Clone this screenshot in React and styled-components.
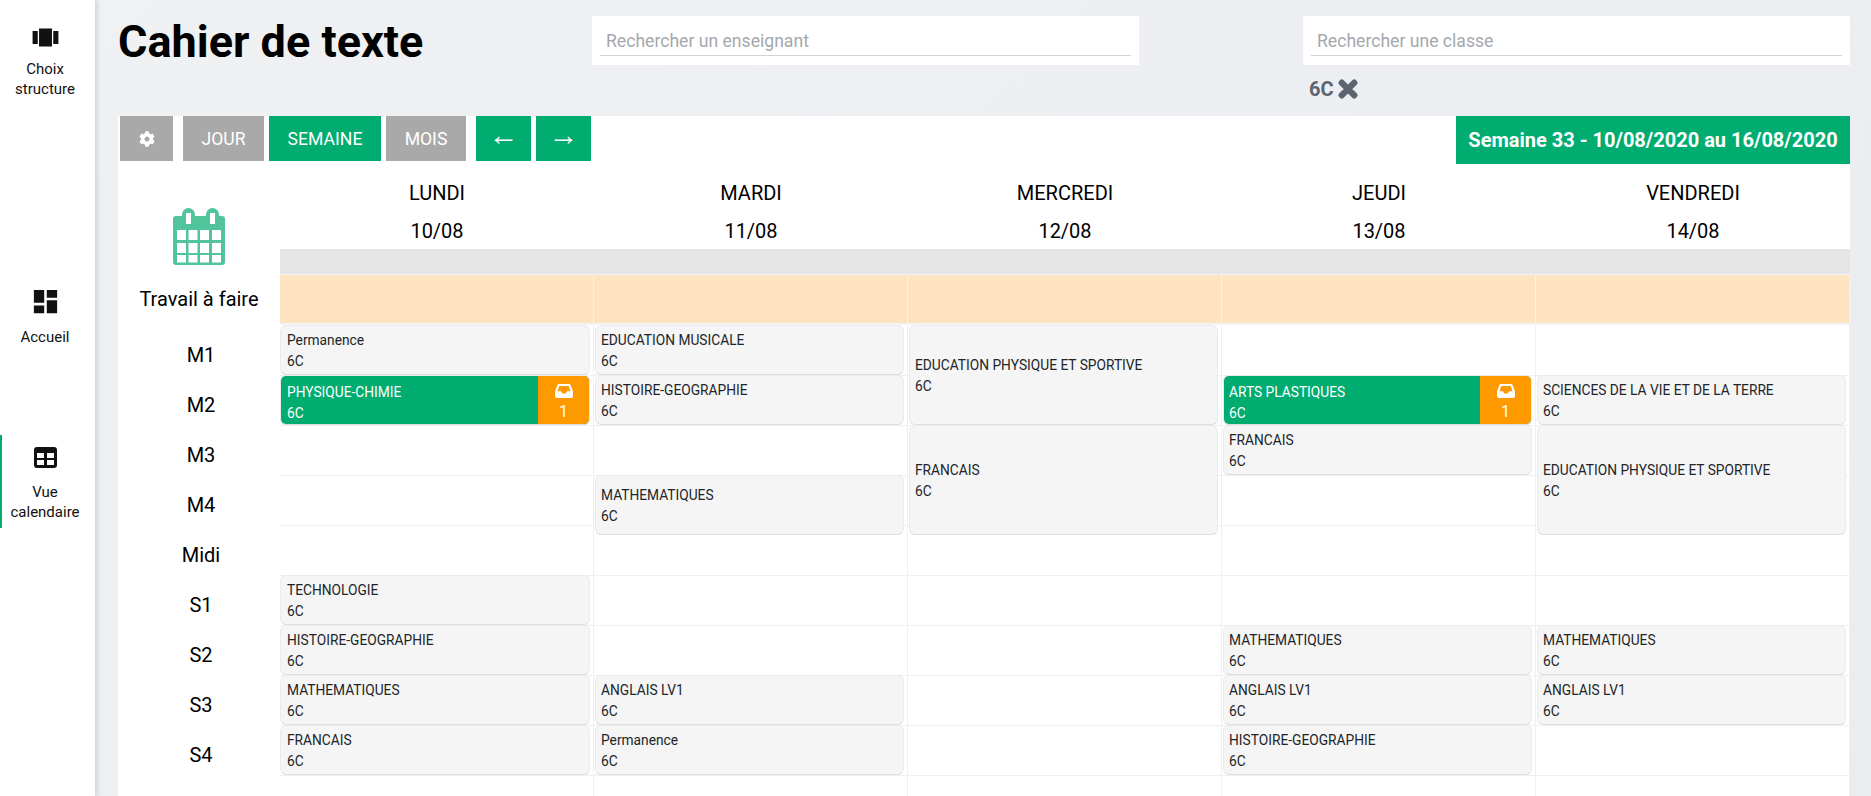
import React from 'react';
import styled, { createGlobalStyle } from 'styled-components';
import { FaCog, FaTimes } from 'react-icons/fa';
import { MdViewCarousel, MdDashboard } from 'react-icons/md';

const GlobalStyle = createGlobalStyle`
  html, body { margin: 0; padding: 0; height: 100%; }
  body {
    font-family: Roboto, "Liberation Sans", sans-serif;
    background: linear-gradient(135deg, #f0f1f3, #ebecf0);
    color: #000;
    overflow: hidden;
  }
`;

const GREEN = '#00ac6f';

const Page = styled.div`
  display: flex;
  height: 796px;
`;

const Sidebar = styled.nav`
  width: 95px;
  flex: none;
  background: #fff;
  box-shadow: 2px 0 5px rgba(0, 0, 0, 0.14);
  padding-top: 18px;
  box-sizing: border-box;
`;

const NavItem = styled.a`
  display: flex;
  flex-direction: column;
  align-items: center;
  text-align: center;
  height: ${p => p.$height}px;
  padding: ${p => p.$top}px 7px 0 0;
  box-sizing: border-box;
  border-left: 2px solid ${p => (p.$active ? GREEN : 'transparent')};
  font-size: 15px;
  line-height: 20px;
  color: #111;
  svg { display: block; margin-bottom: ${p => p.$iconGap}px; }
`;

const Main = styled.main`
  flex: 1;
  padding: 0 21px 0 23px;
  min-width: 0;
`;

const Header = styled.header`
  display: flex;
  height: 116px;
`;

const Title = styled.h1`
  margin: 15px 0 0;
  width: 474px;
  flex: none;
  font-size: 45px;
  line-height: 54px;
  font-weight: 700;
`;

const SearchBlock = styled.div`
  width: ${p => p.$width}px;
  margin-right: ${p => p.$right}px;
  flex: none;
  padding-top: 16px;
`;

const SearchBox = styled.div`
  height: 49px;
  background: #fff;
  padding: 8px 8px 0;
  box-sizing: border-box;
`;

const SearchInput = styled.input`
  display: block;
  width: 100%;
  height: 32px;
  box-sizing: border-box;
  border: 0;
  border-bottom: 1px solid #d4d4d4;
  outline: 0;
  padding: 2px 6px 0;
  background: transparent;
  font-family: inherit;
  font-size: 17.6px;
  &::placeholder { color: #a4a8ad; opacity: 1; }
`;

const Tag = styled.div`
  display: flex;
  align-items: center;
  gap: 1px;
  height: 24px;
  margin: 12px 0 0 6px;
  font-size: 20px;
  font-weight: 700;
  color: #5d6470;
  svg { stroke: currentColor; stroke-width: 28px; }
`;

const Panel = styled.section`
  background: #fff;
  height: 680px;
  overflow: hidden;
`;

const Toolbar = styled.div`
  display: flex;
  align-items: flex-start;
  padding-left: 2px;
`;

const ToolButton = styled.button`
  height: 45px;
  width: ${p => p.$width}px;
  margin-right: ${p => p.$right}px;
  flex: none;
  border: 0;
  padding: 0;
  background: ${p => (p.$green ? GREEN : '#a9a9a9')};
  color: #fff;
  font-family: inherit;
  font-size: 17.6px;
  display: flex;
  align-items: center;
  justify-content: center;
`;

const ArrowButton = styled(ToolButton)`
  font-size: 30px;
  font-weight: 300;
  padding-bottom: 8px;
`;

const WeekLabel = styled.div`
  margin-left: auto;
  width: 394px;
  height: 48px;
  background: ${GREEN};
  color: #fff;
  font-size: 20px;
  font-weight: 700;
  display: flex;
  align-items: center;
  justify-content: center;
`;

const Schedule = styled.div`
  display: grid;
  grid-template-columns: 162px repeat(5, 314px);
  grid-template-rows: 85px 25px 51px auto;
  height: 632px;
`;

const Corner = styled.div`
  grid-column: 1;
  grid-row: 1 / span 2;
  display: flex;
  justify-content: center;
  padding-top: 44px;
  box-sizing: border-box;
`;

const DayHead = styled.div`
  text-align: center;
  font-size: 20px;
  line-height: 38px;
  padding-top: 10px;
`;

const Band = styled.div`
  grid-column: 2 / span 5;
  background: #e5e5e5;
`;

const HomeworkLabel = styled.div`
  grid-column: 1;
  font-size: 20px;
  display: flex;
  justify-content: center;
  padding-top: 13px;
  box-sizing: border-box;
`;

const HomeworkCell = styled.div`
  background: #fde3bf;
  border: solid #f3f3f3;
  border-width: 1px 1px 2px 0;
`;

const SlotLabels = styled.div`
  grid-column: 1;
  display: flex;
  flex-direction: column;
`;

const SlotLabel = styled.div`
  height: 50px;
  font-size: 20px;
  text-align: center;
  line-height: 50px;
  padding: 5px 0 0 4px;
  box-sizing: border-box;
`;

const CardText = styled.div`
  flex: 1;
  display: flex;
  flex-direction: column;
  justify-content: center;
  padding: ${p => (p.$green ? '6px' : '1px')} 6px 0;
  font-size: 13.75px;
  line-height: 21px;
`;

const Card = styled.div`
  grid-row: ${p => p.$row} / span ${p => p.$span || 1};
  margin: 0 3px ${p => -(p.$extra || 0)}px 0;
  display: flex;
  background: ${p => (p.$green ? GREEN : '#f5f5f5')};
  color: ${p => (p.$green ? '#fff' : '#212529')};
  border: 1px solid #ebebeb;
  border-bottom-color: #dedede;
  border-radius: 6px;
  box-sizing: border-box;
  overflow: hidden;
`;

const DayColumn = styled.div`
  display: grid;
  grid-template-rows: repeat(9, 50px);
  align-content: start;
  border-right: 1px solid #f0f0f0;
  box-sizing: border-box;
  background: repeating-linear-gradient(to bottom, transparent 0 49px, #f0f0f0 49px 50px) 0 1px / 100% 450px no-repeat;
  & + & ${Card} { margin-left: 1px; }
  & + & ${CardText} { padding-left: 5px; }
`;

const Badge = styled.div`
  width: 51px;
  flex: none;
  background: #ff9900;
  color: #fff;
  display: flex;
  flex-direction: column;
  align-items: center;
  font-size: 16px;
  line-height: 20px;
  padding-top: 8px;
  box-sizing: border-box;
  svg { display: block; margin-bottom: 4px; }
`;

const CalendarIcon = () => (
  <svg width="52" height="57" viewBox="0 0 52 57" fill="none">
    <path
      fillRule="evenodd"
      fill="#52c49b"
      d="M3 8h6V6.500a6.500 6.500 0 0 1 13 0V8h11V6.500a6.500 6.500 0 0 1 13 0V8h3a3 3 0 0 1 3 3v43a3 3 0 0 1-3 3H3a3 3 0 0 1-3-3V11a3 3 0 0 1 3-3zM13 5v11h5V5zM37 5v11h5V5zM4 22v10h9V22zM15.500 22v10h9V22zM27 22v10h9V22zM39 22v10h9V22zM4 35v10h9V35zM15.500 35v10h9V35zM27 35v10h9V35zM39 35v10h9V35zM4 47v7.500h9V47zM15.500 47v7.500h9V47zM27 47v7.500h9V47zM39 47v7.500h9V47z"
    />
  </svg>
);

const TableIcon = () => (
  <svg width="23" height="21" viewBox="0 0 23 21">
    <path
      fillRule="evenodd"
      fill="#111"
      d="M3 0h17a3 3 0 0 1 3 3v15a3 3 0 0 1-3 3H3a3 3 0 0 1-3-3V3a3 3 0 0 1 3-3zM3 6v5h7V6zM13 6v5h7V6zM3 13v5h7v-5zM13 13v5h7v-5z"
    />
  </svg>
);

const InboxIcon = () => (
  <svg width="18" height="14" viewBox="0 0 18 14">
    <path
      fillRule="evenodd"
      fill="#fff"
      d="M4 0h10c.8 0 1.400.4 1.700 1.200L18 7.500V12a2 2 0 0 1-2 2H2a2 2 0 0 1-2-2V7.500l2.300-6.300C2.600.4 3.200 0 4 0zM4.300 2L2.500 7.200H6l1.200 2.300h3.600L12 7.200h3.500L13.700 2z"
    />
  </svg>
);

const days = [
  { name: 'LUNDI', date: '10/08', cards: [
    { row: 1, title: 'Permanence' },
    { row: 2, title: 'PHYSIQUE-CHIMIE', green: true },
    { row: 6, title: 'TECHNOLOGIE' },
    { row: 7, title: 'HISTOIRE-GEOGRAPHIE' },
    { row: 8, title: 'MATHEMATIQUES' },
    { row: 9, title: 'FRANCAIS' },
  ] },
  { name: 'MARDI', date: '11/08', cards: [
    { row: 1, title: 'EDUCATION MUSICALE' },
    { row: 2, title: 'HISTOIRE-GEOGRAPHIE' },
    { row: 4, title: 'MATHEMATIQUES', extra: 10 },
    { row: 8, title: 'ANGLAIS LV1' },
    { row: 9, title: 'Permanence' },
  ] },
  { name: 'MERCREDI', date: '12/08', cards: [
    { row: 1, span: 2, title: 'EDUCATION PHYSIQUE ET SPORTIVE' },
    { row: 3, span: 2, extra: 10, title: 'FRANCAIS' },
  ] },
  { name: 'JEUDI', date: '13/08', cards: [
    { row: 2, title: 'ARTS PLASTIQUES', green: true },
    { row: 3, title: 'FRANCAIS' },
    { row: 7, title: 'MATHEMATIQUES' },
    { row: 8, title: 'ANGLAIS LV1' },
    { row: 9, title: 'HISTOIRE-GEOGRAPHIE' },
  ] },
  { name: 'VENDREDI', date: '14/08', cards: [
    { row: 2, title: 'SCIENCES DE LA VIE ET DE LA TERRE' },
    { row: 3, span: 2, extra: 10, title: 'EDUCATION PHYSIQUE ET SPORTIVE' },
    { row: 7, title: 'MATHEMATIQUES' },
    { row: 8, title: 'ANGLAIS LV1' },
  ] },
];

const slots = ['M1', 'M2', 'M3', 'M4', 'Midi', 'S1', 'S2', 'S3', 'S4'];

export default function App() {
  return (
    <>
      <GlobalStyle />
      <Page>
        <Sidebar>
          <NavItem $height={264} $top={4} $iconGap={6}>
            <MdViewCarousel size={31} />
            <span>Choix<br />structure</span>
          </NavItem>
          <NavItem $height={153} $top={4} $iconGap={10}>
            <MdDashboard size={31} />
            <span>Accueil</span>
          </NavItem>
          <NavItem $height={93} $top={12} $iconGap={14} $active>
            <TableIcon />
            <span>Vue<br />calendaire</span>
          </NavItem>
        </Sidebar>
        <Main>
          <Header>
            <Title>Cahier de texte</Title>
            <SearchBlock $width={547} $right={164}>
              <SearchBox><SearchInput placeholder="Rechercher un enseignant" /></SearchBox>
            </SearchBlock>
            <SearchBlock $width={547} $right={0}>
              <SearchBox><SearchInput placeholder="Rechercher une classe" /></SearchBox>
              <Tag>6C <FaTimes size={26} /></Tag>
            </SearchBlock>
          </Header>
          <Panel>
            <Toolbar>
              <ToolButton $width={53} $right={10}><FaCog size={16} /></ToolButton>
              <ToolButton $width={81} $right={5}>JOUR</ToolButton>
              <ToolButton $width={112} $right={5} $green>SEMAINE</ToolButton>
              <ToolButton $width={80} $right={10}>MOIS</ToolButton>
              <ArrowButton $width={55} $right={5} $green>←</ArrowButton>
              <ArrowButton $width={55} $right={0} $green>→</ArrowButton>
              <WeekLabel>Semaine 33 - 10/08/2020 au 16/08/2020</WeekLabel>
            </Toolbar>
            <Schedule>
              <Corner><CalendarIcon /></Corner>
              {days.map(d => (
                <DayHead key={d.name}>{d.name}<br />{d.date}</DayHead>
              ))}
              <Band />
              <HomeworkLabel>Travail à faire</HomeworkLabel>
              {days.map(d => <HomeworkCell key={d.name} />)}
              <SlotLabels>
                {slots.map(s => <SlotLabel key={s}>{s}</SlotLabel>)}
              </SlotLabels>
              {days.map(d => (
                <DayColumn key={d.name}>
                  {d.cards.map(c => (
                    <Card key={c.row} $row={c.row} $span={c.span} $extra={c.extra} $green={c.green}>
                      <CardText $green={c.green}>
                        <div>{c.title}</div>
                        <div>6C</div>
                      </CardText>
                      {c.green && (
                        <Badge>
                          <InboxIcon />
                          1
                        </Badge>
                      )}
                    </Card>
                  ))}
                </DayColumn>
              ))}
            </Schedule>
          </Panel>
        </Main>
      </Page>
    </>
  );
}
